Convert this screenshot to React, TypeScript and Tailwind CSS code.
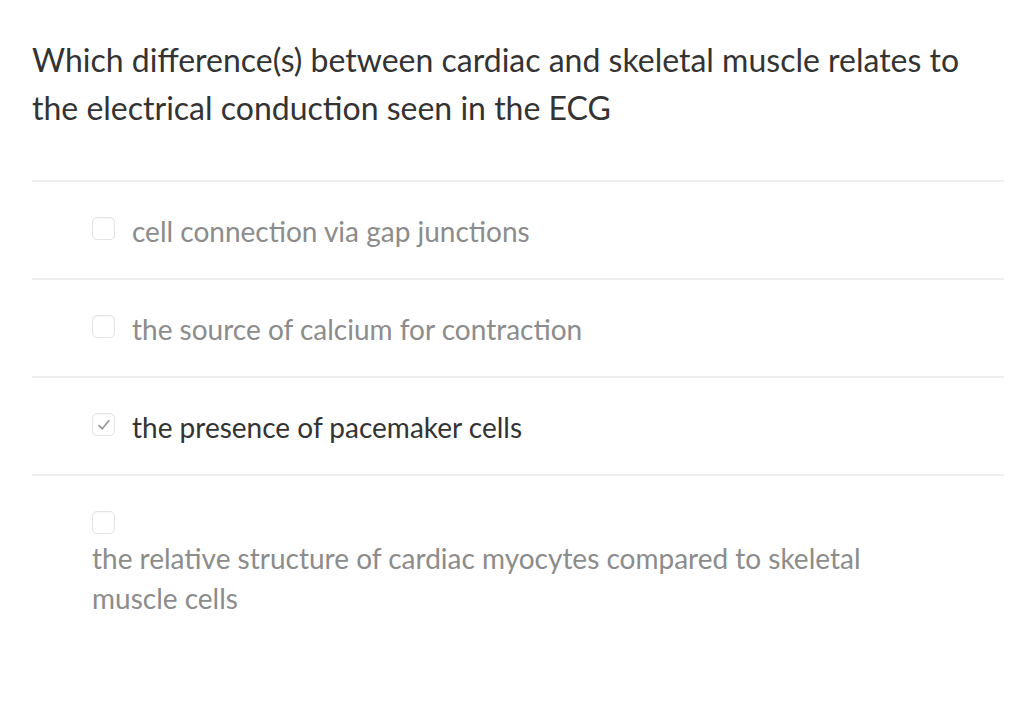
import React from "react";

type Option = {
  label: string;
  checked?: boolean;
  stacked?: boolean;
};

const options: Option[] = [
  { label: "cell connection via gap junctions" },
  { label: "the source of calcium for contraction" },
  { label: "the presence of pacemaker cells", checked: true },
  {
    label:
      "the relative structure of cardiac myocytes compared to skeletal muscle cells",
    stacked: true,
  },
];

function Checkbox({ checked }: { checked?: boolean }) {
  return (
    <span className="inline-flex h-[23px] w-[23px] shrink-0 items-center justify-center rounded-[5px] border border-[#e4e4e4] bg-white shadow-[inset_0_1px_2px_rgba(0,0,0,0.04)]">
      {checked ? (
        <svg viewBox="0 0 16 16" className="h-[16px] w-[16px]">
          <path
            d="M3 8.6 L6.3 11.8 L12.8 3.8"
            fill="none"
            stroke="#9a9a9a"
            strokeWidth="1.8"
            strokeLinecap="round"
            strokeLinejoin="round"
          />
        </svg>
      ) : null}
    </span>
  );
}

export default function App() {
  return (
    <div className="min-h-screen bg-white font-['Lato','Noto_Sans',sans-serif] px-8 pt-9">
      <h1 className="text-[32px] leading-[48px] font-normal text-[#333333]">
        Which difference(s) between cardiac and skeletal muscle relates to the
        electrical conduction seen in the ECG
      </h1>

      <ul className="mt-12">
        {options.map((opt) => (
          <li
            key={opt.label}
            className="border-t-2 border-[#eeeeee] pl-[60px]"
          >
            {opt.stacked ? (
              <div className="pt-[35px] pb-6">
                <div className="flex">
                  <Checkbox checked={opt.checked} />
                </div>
                <p className="mt-[4px] max-w-[800px] text-[28px] leading-[40px] text-[#8c8c8c]">
                  {opt.label}
                </p>
              </div>
            ) : (
              <div className="flex items-start gap-[17px] pt-[29px] pb-[27px]">
                <span className="mt-[6px] flex">
                  <Checkbox checked={opt.checked} />
                </span>
                <span
                  className={`text-[28px] leading-[40px] ${
                    opt.checked ? "text-[#333333]" : "text-[#8c8c8c]"
                  }`}
                >
                  {opt.label}
                </span>
              </div>
            )}
          </li>
        ))}
      </ul>
    </div>
  );
}
